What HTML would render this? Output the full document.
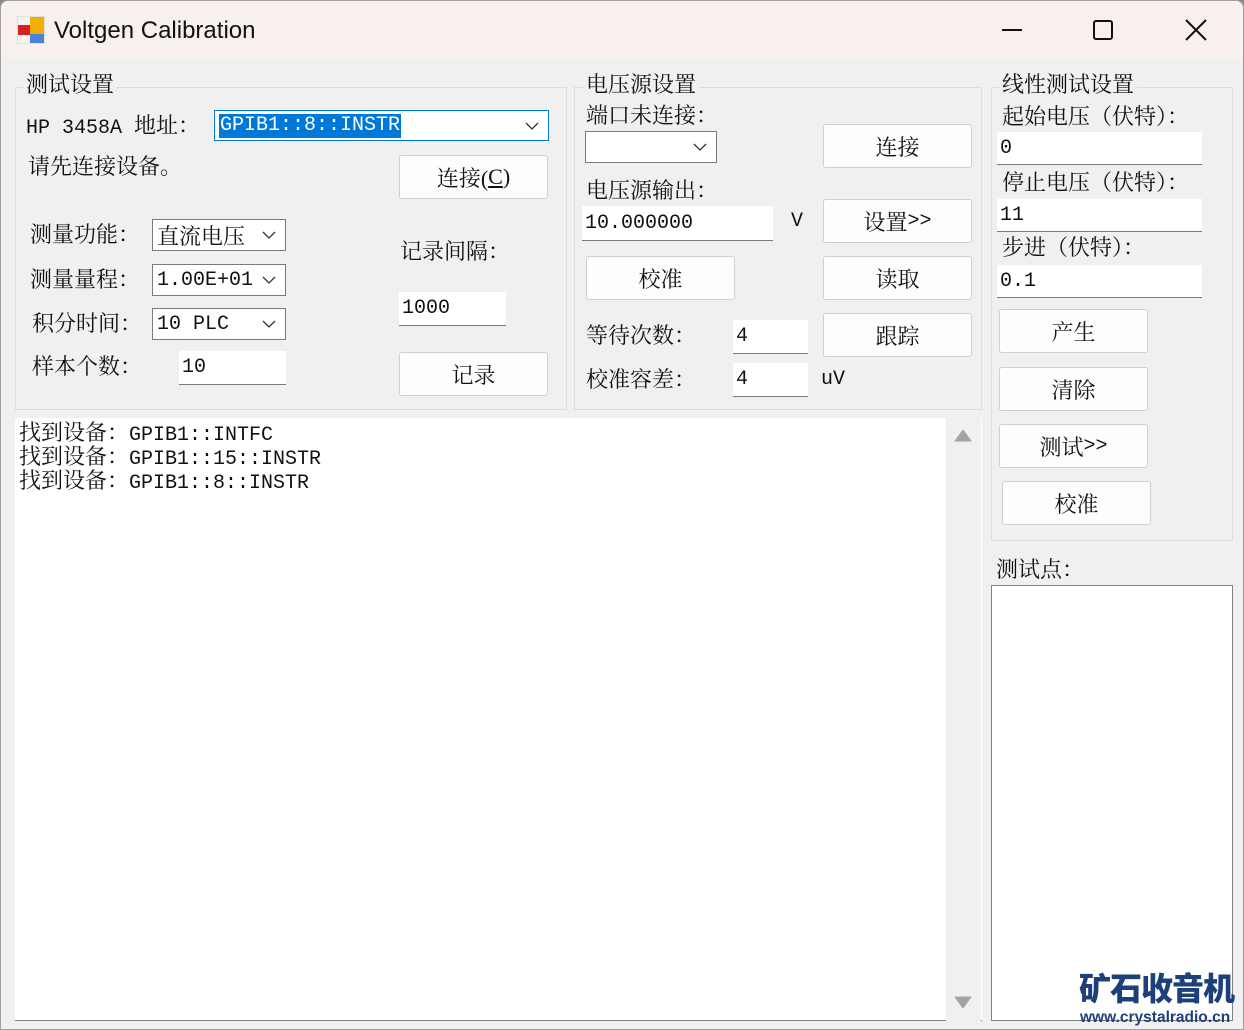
<!DOCTYPE html>
<html><head><meta charset="utf-8">
<style>
*{box-sizing:border-box;margin:0;padding:0}
body{width:1244px;height:1030px;background:#8a8a8a;overflow:hidden;position:relative;font-family:"Liberation Serif","Noto Serif CJK SC",serif;font-size:22px;color:#111}
.m{font-family:"Liberation Mono",monospace;font-size:20px}
.win{position:absolute;left:0;top:0;width:1244px;height:1030px;background:#f0f0f0;border:1px solid #a0a0a0;border-radius:8px 8px 0 0;overflow:hidden}
.title{position:absolute;left:0;top:0;width:100%;height:58px;background:#f8f0ec}
.a{position:absolute;white-space:nowrap;line-height:1}
.grp{position:absolute;border:1px solid #dcdcdc}
.gt{position:absolute;background:#f0f0f0;padding:0 3px;line-height:1;white-space:nowrap}
.btn{position:absolute;background:#fdfdfd;border:1px solid #d0d0d0;border-radius:3px;text-align:center;display:flex;align-items:center;justify-content:center}
.tb{position:absolute;background:#fff;border-bottom:1px solid #7a7a7a;display:flex;align-items:center;padding-left:3px}
.cb{position:absolute;background:#fff;border:1px solid #7a7a7a;display:flex;align-items:center;padding-left:4px}
.cb svg{position:absolute;right:9px;top:50%;margin-top:-4px}
.ln{position:absolute;left:18px;height:24px;line-height:24px;white-space:pre}
</style></head><body>
<div class="win">
<div class="title">
 <svg style="position:absolute;left:16px;top:15px" width="28" height="28" viewBox="0 0 28 28">
  <rect x="0" y="0" width="28" height="28" fill="#f4f4f4" stroke="#ccc"/>
  <rect x="1" y="9" width="12" height="10" fill="#d82020"/>
  <rect x="13" y="1" width="14" height="17" fill="#f0b000"/>
  <rect x="13" y="18" width="14" height="9" fill="#4a80e0"/>
 </svg>
 <span class="a" style="left:53px;top:18px;font-family:'Liberation Sans',sans-serif;font-size:24px">Voltgen Calibration</span>
 <div style="position:absolute;left:1001px;top:28px;width:20px;height:2px;background:#111"></div>
 <div style="position:absolute;left:1092px;top:19px;width:20px;height:20px;border:2px solid #111;border-radius:3px"></div>
 <svg style="position:absolute;left:1184px;top:18px" width="22" height="22"><path d="M1 1L21 21M21 1L1 21" stroke="#111" stroke-width="2"/></svg>
</div>

<!-- group 1 -->
<div class="grp" style="left:14px;top:86px;width:552px;height:323px"></div>
<span class="gt" style="left:22px;top:73px">测试设置</span>
<span class="a" style="left:25px;top:114px"><span class="m">HP 3458A </span>地址：</span>
<div class="cb" style="left:213px;top:109px;width:335px;height:31px;border-color:#0078d7"><span class="m" style="background:#0078d7;color:#fff;line-height:24px;padding:0 1px">GPIB1::8::INSTR</span><svg width="14" height="8"><path d="M1 1L7 7L13 1" stroke="#333" fill="none" stroke-width="1.3"/></svg></div>
<span class="a" style="left:27px;top:155px">请先连接设备。</span>
<div class="btn" style="left:398px;top:154px;width:149px;height:44px">连接(<u>C</u>)</div>
<span class="a" style="left:29px;top:223px">测量功能：</span>
<div class="cb" style="left:151px;top:218px;width:134px;height:32px">直流电压<svg width="14" height="8"><path d="M1 1L7 7L13 1" stroke="#333" fill="none" stroke-width="1.3"/></svg></div>
<span class="a" style="left:29px;top:268px">测量量程：</span>
<div class="cb" style="left:151px;top:263px;width:134px;height:32px"><span class="m">1.00E+01</span><svg width="14" height="8"><path d="M1 1L7 7L13 1" stroke="#333" fill="none" stroke-width="1.3"/></svg></div>
<span class="a" style="left:31px;top:312px">积分时间：</span>
<div class="cb" style="left:151px;top:307px;width:134px;height:32px"><span class="m">10 PLC</span><svg width="14" height="8"><path d="M1 1L7 7L13 1" stroke="#333" fill="none" stroke-width="1.3"/></svg></div>
<span class="a" style="left:31px;top:355px">样本个数：</span>
<div class="tb" style="left:178px;top:350px;width:107px;height:34px"><span class="m">10</span></div>
<span class="a" style="left:399px;top:240px">记录间隔：</span>
<div class="tb" style="left:398px;top:291px;width:107px;height:34px"><span class="m">1000</span></div>
<div class="btn" style="left:398px;top:351px;width:149px;height:44px">记录</div>

<!-- group 2 -->
<div class="grp" style="left:573px;top:86px;width:408px;height:323px"></div>
<span class="gt" style="left:582px;top:73px">电压源设置</span>
<span class="a" style="left:585px;top:104px">端口未连接：</span>
<div class="cb" style="left:584px;top:130px;width:132px;height:32px"><svg width="14" height="8"><path d="M1 1L7 7L13 1" stroke="#333" fill="none" stroke-width="1.3"/></svg></div>
<div class="btn" style="left:822px;top:123px;width:149px;height:44px">连接</div>
<span class="a" style="left:585px;top:179px">电压源输出：</span>
<div class="tb" style="left:581px;top:205px;width:191px;height:35px"><span class="m">10.000000</span></div>
<span class="a m" style="left:790px;top:211px">V</span>
<div class="btn" style="left:822px;top:198px;width:149px;height:44px">设置<span class="m">&gt;&gt;</span></div>
<div class="btn" style="left:585px;top:255px;width:149px;height:44px">校准</div>
<div class="btn" style="left:822px;top:255px;width:149px;height:44px">读取</div>
<span class="a" style="left:585px;top:324px">等待次数：</span>
<div class="tb" style="left:732px;top:319px;width:75px;height:34px"><span class="m">4</span></div>
<div class="btn" style="left:822px;top:312px;width:149px;height:44px">跟踪</div>
<span class="a" style="left:585px;top:368px">校准容差：</span>
<div class="tb" style="left:732px;top:362px;width:75px;height:34px"><span class="m">4</span></div>
<span class="a m" style="left:820px;top:369px">uV</span>

<!-- group 3 -->
<div class="grp" style="left:990px;top:86px;width:242px;height:454px"></div>
<span class="gt" style="left:998px;top:73px">线性测试设置</span>
<span class="a" style="left:1001px;top:105px">起始电压（伏特）：</span>
<div class="tb" style="left:996px;top:131px;width:205px;height:33px"><span class="m">0</span></div>
<span class="a" style="left:1001px;top:171px">停止电压（伏特）：</span>
<div class="tb" style="left:996px;top:198px;width:205px;height:33px"><span class="m">11</span></div>
<span class="a" style="left:1001px;top:236px">步进（伏特）：</span>
<div class="tb" style="left:996px;top:264px;width:205px;height:33px"><span class="m">0.1</span></div>
<div class="btn" style="left:998px;top:308px;width:149px;height:44px">产生</div>
<div class="btn" style="left:998px;top:366px;width:149px;height:44px">清除</div>
<div class="btn" style="left:998px;top:423px;width:149px;height:44px">测试<span class="m">&gt;&gt;</span></div>
<div class="btn" style="left:1001px;top:480px;width:149px;height:44px">校准</div>
<span class="a" style="left:995px;top:558px">测试点：</span>
<div style="position:absolute;left:990px;top:584px;width:242px;height:436px;background:#fff;border:1px solid #828282"></div>

<!-- log -->
<div style="position:absolute;left:14px;top:417px;width:967px;height:603px;background:#fff;border-bottom:1px solid #828282"></div>
<div style="position:absolute;left:945px;top:417px;width:35px;height:603px;background:#f0f0f0"></div>
<svg style="position:absolute;left:953px;top:428px" width="18" height="13"><path d="M9 1L17 12H1Z" fill="#a3a3a3" stroke="#a3a3a3" stroke-linejoin="round"/></svg>
<svg style="position:absolute;left:953px;top:995px" width="18" height="13"><path d="M1 1H17L9 12Z" fill="#a3a3a3" stroke="#a3a3a3" stroke-linejoin="round"/></svg>
<div class="ln" style="top:420px">找到设备：<span class="m">GPIB1::INTFC</span></div>
<div class="ln" style="top:444px">找到设备：<span class="m">GPIB1::15::INSTR</span></div>
<div class="ln" style="top:468px">找到设备：<span class="m">GPIB1::8::INSTR</span></div>

<!-- watermark -->
<span class="a" style="left:1078px;top:970px;font-family:'Noto Sans CJK SC',sans-serif;font-weight:900;font-size:32px;color:#1d3f7a;letter-spacing:-1px">矿石收音机</span>
<span class="a" style="left:1079px;top:1009px;font-family:'Liberation Sans',sans-serif;font-weight:bold;font-size:15.5px;color:#1d3f7a">www.crystalradio.cn</span>
</div>
</body></html>
